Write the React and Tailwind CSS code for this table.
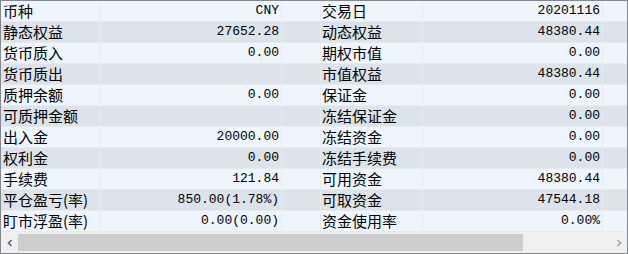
const rows = [
  ['币种', 'CNY', '交易日', '20201116'],
  ['静态权益', '27652.28', '动态权益', '48380.44'],
  ['货币质入', '0.00', '期权市值', '0.00'],
  ['货币质出', '', '市值权益', '48380.44'],
  ['质押余额', '0.00', '保证金', '0.00'],
  ['可质押金额', '', '冻结保证金', '0.00'],
  ['出入金', '20000.00', '冻结资金', '0.00'],
  ['权利金', '0.00', '冻结手续费', '0.00'],
  ['手续费', '121.84', '可用资金', '48380.44'],
  ['平仓盈亏(率)', '850.00(1.78%)', '可取资金', '47544.18'],
  ['盯市浮盈(率)', '0.00(0.00)', '资金使用率', '0.00%'],
];

const cn = "font-['Noto_Sans_CJK_SC','Noto_Sans',sans-serif] text-[15px]";
const num = "font-['Liberation_Mono','DejaVu_Sans_Mono',monospace] text-[13px]";

export default function App() {
  return (
    <div className="w-[628px] h-[254px] border border-[#828790] bg-[#f0f0f0] flex flex-col overflow-hidden text-black">
      <div className="flex flex-col">
        {rows.map((r, i) => (
          <div
            key={i}
            className={`grid grid-cols-[100px_181px_39px_102px_180px_1fr] h-[21px] border-b border-[#e8ebee] ${i % 2 ? 'bg-[#dce3ea]' : 'bg-[#eef5fd]'}`}
          >
            <div className={`${cn} border-r border-[#e8ebee] pl-[2px] leading-[20px] whitespace-nowrap`}>{r[0]}</div>
            <div className={`${num} border-r border-[#e8ebee] pr-[2px] text-right leading-[20px] whitespace-nowrap`}>{r[1]}</div>
            <div className="border-r border-[#e8ebee]" />
            <div className={`${cn} border-r border-[#e8ebee] pl-[1px] leading-[20px] whitespace-nowrap`}>{r[2]}</div>
            <div className={`${num} border-r border-[#e8ebee] pr-[2px] text-right leading-[20px] whitespace-nowrap`}>{r[3]}</div>
            <div />
          </div>
        ))}
      </div>
      <div className="mt-[2px] flex h-[17px] bg-[#f0f0f0]">
        <div className="w-[17px] flex items-center justify-center">
          <svg width="8" height="8" viewBox="0 0 8 8">
            <path d="M5.5 1 L2.5 4 L5.5 7" fill="none" stroke="#606060" strokeWidth="1.6" />
          </svg>
        </div>
        <div className="w-[505px] bg-[#cdcdcd]" />
        <div className="flex-1" />
        <div className="w-[17px] flex items-center justify-center">
          <svg width="8" height="8" viewBox="0 0 8 8">
            <path d="M2.5 1 L5.5 4 L2.5 7" fill="none" stroke="#a0a0a0" strokeWidth="1.6" />
          </svg>
        </div>
      </div>
    </div>
  );
}
